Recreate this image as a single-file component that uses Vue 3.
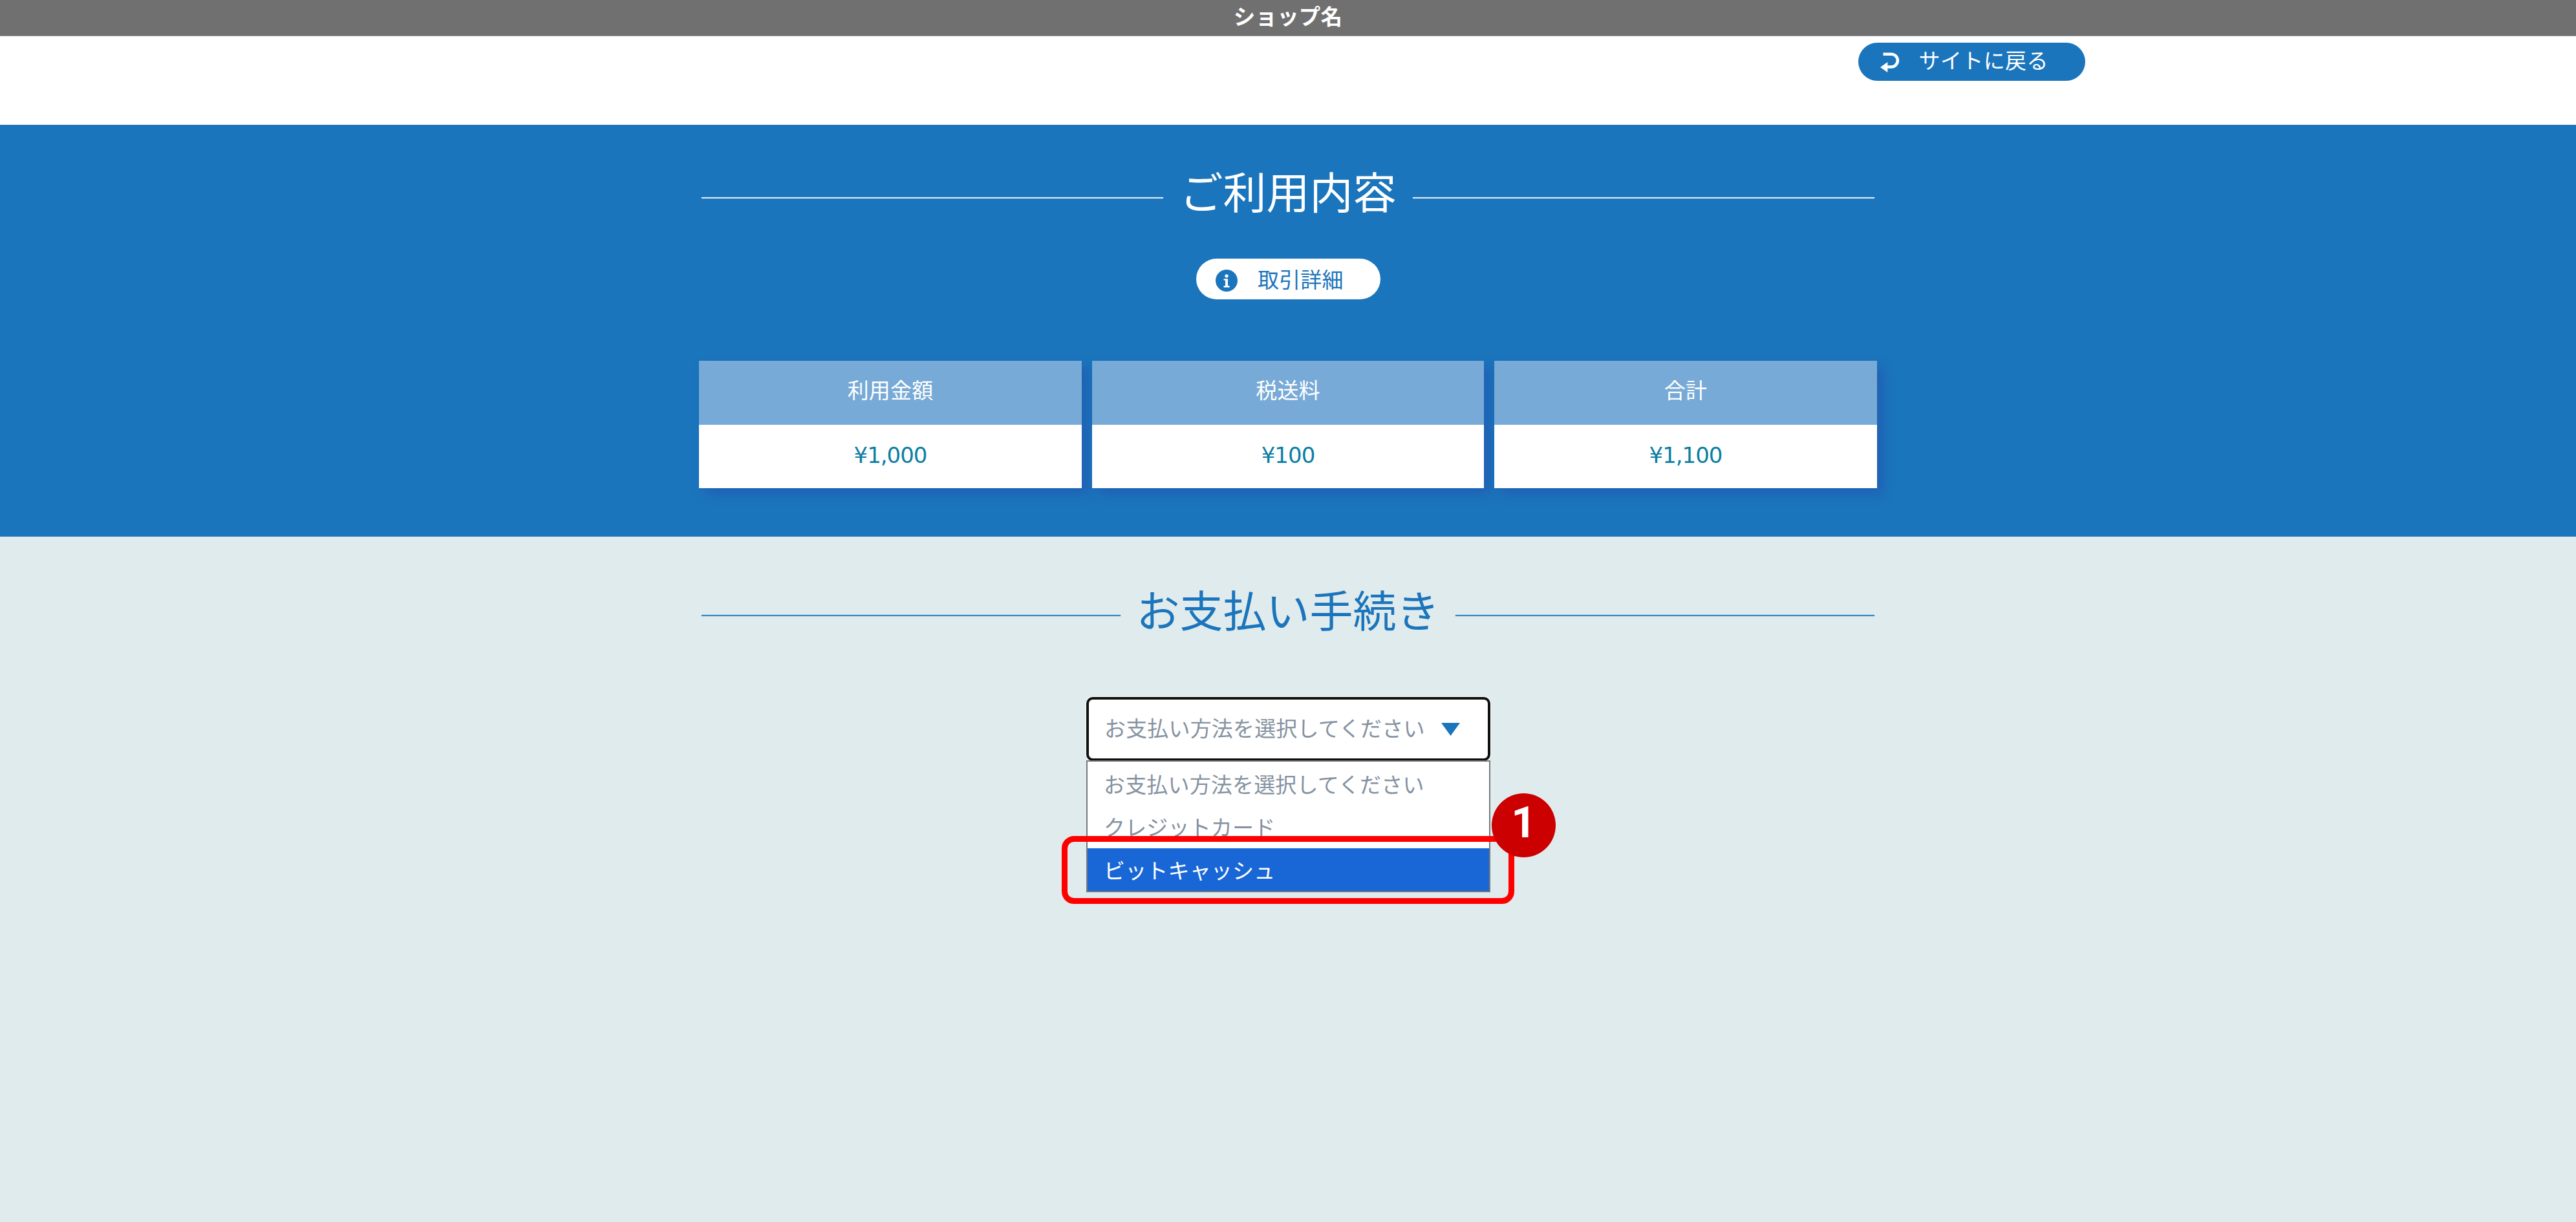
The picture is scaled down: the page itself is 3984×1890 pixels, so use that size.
<script setup>
const amounts = [
  { label: '利用金額', value: '¥1,000' },
  { label: '税送料', value: '¥100' },
  { label: '合計', value: '¥1,100' },
]
const options = ['お支払い方法を選択してください', 'クレジットカード', 'ビットキャッシュ']
const selected = 2
</script>

<template>
  <div class="page">
    <header class="shop">ショップ名</header>
    <div class="toolbar">
      <a class="back">
        <svg class="back-icon" viewBox="0 0 30 33" width="30" height="33">
          <path d="M4.5 3.7H17A9.9 9.9 0 0 1 17 23.5H10" fill="none" stroke="#fff" stroke-width="4.6" />
          <path d="M0 24L11.3 16V32Z" fill="#fff" />
        </svg>
        <span>サイトに戻る</span>
      </a>
    </div>

    <section class="usage">
      <h2 class="heading"><span>ご利用内容</span></h2>
      <a class="detail">
        <svg class="info" viewBox="0 0 34 34" width="34" height="34">
          <circle cx="17" cy="17" r="17" fill="#1b75bc" />
          <circle cx="17" cy="9.8" r="2.6" fill="#fff" />
          <path d="M12.6 14.2H19V25H21.6V27.4H12.6V25H15V16.6H12.6Z" fill="#fff" />
        </svg>
        <span>取引詳細</span>
      </a>
      <div class="cards">
        <div v-for="item in amounts" :key="item.label" class="card">
          <div class="card-label">{{ item.label }}</div>
          <div class="card-value">{{ item.value }}</div>
        </div>
      </div>
    </section>

    <section class="payment">
      <h2 class="heading"><span>お支払い手続き</span></h2>
      <div class="picker">
        <div class="select">
          <span>{{ options[0] }}</span>
          <svg class="caret" viewBox="0 0 29 20" width="29" height="20">
            <path d="M0 0H29L14.5 20Z" fill="#1b75bc" />
          </svg>
        </div>
        <ul class="menu">
          <li v-for="(option, i) in options" :key="option" :class="{ active: i === selected }">{{ option }}</li>
        </ul>
        <div class="marker"></div>
        <div class="badge">1</div>
      </div>
    </section>
  </div>
</template>

<style>
body {
  margin: 0;
  background: #e0ebed;
}
</style>

<style scoped>
.page {
  display: flex;
  flex-direction: column;
  min-height: 1890px;
  font-family: "Noto Sans CJK JP", sans-serif;
  font-size: 33px;
  letter-spacing: 0.17px;
  background: #e0ebed;
}
.shop {
  box-sizing: border-box;
  height: 56px;
  line-height: 47px;
  border-bottom: 1px solid #8f8f8f;
  background: #707070;
  color: #fff;
  font-size: 33.5px;
  font-weight: 700;
  text-align: center;
}
.toolbar {
  box-sizing: border-box;
  display: flex;
  justify-content: flex-end;
  height: 137px;
  padding: 10px 759.5px 0 0;
  background: #fff;
}
.back {
  box-sizing: border-box;
  display: flex;
  width: 351px;
  height: 59px;
  padding-left: 34px;
  border-radius: 30px;
  background: #1b75bc;
  color: #fff;
  line-height: 52px;
  letter-spacing: 0.4px;
}
.back-icon {
  margin: 14px 30px 0 0;
}
.usage {
  box-sizing: border-box;
  display: flex;
  flex-direction: column;
  align-items: center;
  height: 637px;
  padding-top: 63px;
  background: #1b75bc;
}
.heading {
  display: flex;
  width: 1814px;
  height: 80px;
  margin: 0;
  font-size: 67px;
  font-weight: 400;
  line-height: 76px;
  letter-spacing: 0;
  color: #fff;
}
.heading::before,
.heading::after {
  content: "";
  flex: 1;
  height: 2px;
  margin-top: 49px;
  background: currentColor;
  box-shadow: 0 0 1px currentColor;
  opacity: 0.85;
}
.heading span {
  margin: 0 25.5px;
}
.detail {
  box-sizing: border-box;
  display: flex;
  width: 285px;
  height: 63px;
  margin-top: 64px;
  padding-left: 30px;
  border-radius: 32px;
  background: #fff;
  color: #1b75bc;
  line-height: 63px;
}
.info {
  margin: 17px 31.5px 0 0;
}
.cards {
  display: flex;
  gap: 16px;
  width: 1822px;
  margin-top: 95px;
}
.card {
  flex: 0 0 592px;
  box-shadow: 9px 9px 16px rgba(40, 70, 170, 0.45);
  text-align: center;
}
.card:nth-child(2) {
  flex-basis: 606px;
}
.card-label {
  height: 99px;
  line-height: 89px;
  background: #77aad6;
  color: #fff;
}
.card-value {
  height: 98px;
  line-height: 95px;
  background: #fff;
  color: #0b7ea3;
  font-family: "DejaVu Sans", sans-serif;
  font-size: 34px;
  letter-spacing: -1px;
}
.payment {
  display: flex;
  flex-direction: column;
  align-items: center;
  padding-top: 71px;
}
.payment .heading {
  height: 177px;
  line-height: 80px;
  color: #1b75bc;
}
.payment .heading span {
  margin: 0 24.5px;
}
.payment .heading::before,
.payment .heading::after {
  margin-top: 50px;
}
.picker {
  position: relative;
  width: 625px;
  margin-left: 1px;
  color: #8592a1;
}
.select {
  box-sizing: border-box;
  display: flex;
  align-items: center;
  height: 99px;
  padding-left: 24px;
  border: 4px solid #101010;
  border-radius: 10px;
  box-shadow: 0 0 0 1px #fff;
  background: #fff;
  line-height: 90px;
}
.select span {
  margin-top: -5px;
}
.caret {
  margin: 1px 0 0 25px;
}
.menu {
  box-sizing: border-box;
  position: absolute;
  top: 98px;
  left: 0;
  width: 625px;
  height: 204px;
  margin: 0;
  padding: 1px 0 0;
  border: 2px solid #767a7c;
  background: #fff;
  list-style: none;
}
.menu li {
  height: 66.4px;
  padding-left: 25px;
  line-height: 66px;
}
.menu .active {
  background: #1967d6;
  color: #fff;
}
.marker {
  box-sizing: border-box;
  position: absolute;
  top: 215px;
  left: -38px;
  width: 700px;
  height: 105px;
  border: 9px solid #f00;
  border-radius: 19px;
}
.badge {
  position: absolute;
  top: 149px;
  left: 627px;
  width: 99px;
  height: 99px;
  border-radius: 50%;
  background: #c00;
  color: #fff;
  font: 700 67px/91px Roboto, Arial, sans-serif;
  text-align: center;
}
</style>
